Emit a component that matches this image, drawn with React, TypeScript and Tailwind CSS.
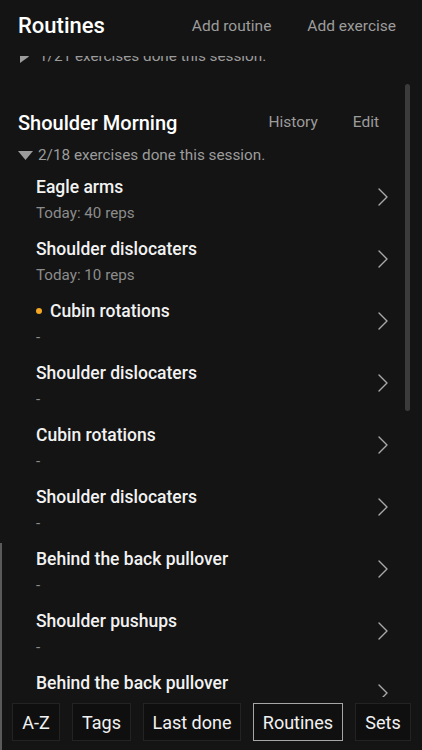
import React from 'react';

type Exercise = { name: string; detail: string; active?: boolean };

const exercises: Exercise[] = [
  { name: 'Eagle arms', detail: 'Today: 40 reps' },
  { name: 'Shoulder dislocaters', detail: 'Today: 10 reps' },
  { name: 'Cubin rotations', detail: '-', active: true },
  { name: 'Shoulder dislocaters', detail: '-' },
  { name: 'Cubin rotations', detail: '-' },
  { name: 'Shoulder dislocaters', detail: '-' },
  { name: 'Behind the back pullover', detail: '-' },
  { name: 'Shoulder pushups', detail: '-' },
  { name: 'Behind the back pullover', detail: '-' },
];

const tabs = [
  { label: 'A-Z', width: 'w-[48px]' },
  { label: 'Tags', width: 'w-[59px]' },
  { label: 'Last done', width: 'w-[98px]' },
  { label: 'Routines', width: 'w-[90px]', active: true },
  { label: 'Sets', width: 'w-[56px]' },
];

const Chevron = () => (
  <svg width="10" height="18" viewBox="0 0 10 18" fill="none" className="shrink-0">
    <path d="M1 1L9 9L1 17" stroke="#a8a8a8" strokeWidth="1.4" strokeLinecap="round" strokeLinejoin="round" />
  </svg>
);

const ExerciseRow = ({ item }: { item: Exercise }) => (
  <div className="flex h-[62px] shrink-0 items-start justify-between pl-[36px] pr-[34px]">
    <div className="flex flex-col">
      <div className="flex h-[22px] items-center gap-[8px] text-[17.5px] font-medium text-[#f2f2f2]">
        {item.active && <span className="h-[6px] w-[6px] rounded-full bg-[#f5a623]" />}
        {item.name}
      </div>
      <div className="mt-[5px] h-[20px] text-[15.2px] leading-[20px] text-[#8c8c8c]">{item.detail}</div>
    </div>
    <div className="mt-[12px]">
      <Chevron />
    </div>
  </div>
);

export default function App() {
  return (
    <div
      className="relative flex h-[750px] w-[422px] flex-col overflow-hidden bg-[#141414]"
      style={{ fontFamily: 'Roboto, "Noto Sans", sans-serif' }}
    >
      {/* header */}
      <div className="z-10 flex h-[56px] shrink-0 items-start justify-between bg-[#141414] pl-[18px] pr-[26px] pt-[11px]">
        <h1 className="text-[22px] font-medium leading-[30px] text-white">Routines</h1>
        <div className="flex gap-[36px] pt-[2px] text-[15.5px] leading-[26px] text-[#9c9c9c]">
          <span>Add routine</span>
          <span>Add exercise</span>
        </div>
      </div>

      {/* list */}
      <div className="relative flex-1 overflow-hidden">
        <div className="-mt-[10px] flex flex-col">
          <div className="flex h-[20px] items-center gap-[10px] pl-[20px] text-[15.3px] text-[#9c9c9c]">
            <svg width="9" height="13" viewBox="0 0 9 13">
              <path d="M0 0L9 6.5L0 13Z" fill="#9c9c9c" />
            </svg>
            <span>1/21 exercises done this session.</span>
          </div>

          <div className="mt-[43px] flex h-[28px] items-center justify-between pl-[18px] pr-[43px]">
            <span className="text-[20px] font-medium text-white">Shoulder Morning</span>
            <div className="flex gap-[35px] text-[15.5px] text-[#9c9c9c]">
              <span>History</span>
              <span>Edit</span>
            </div>
          </div>

          <div className="mt-[8px] flex h-[20px] items-center gap-[5px] pl-[18px] text-[15.3px] text-[#9c9c9c]">
            <svg width="15" height="9" viewBox="0 0 15 9">
              <path d="M0 0H15L7.5 9Z" fill="#9c9c9c" />
            </svg>
            <span>2/18 exercises done this session.</span>
          </div>

          <div className="mt-[11px] flex flex-col">
            {exercises.map((item, i) => (
              <ExerciseRow key={i} item={item} />
            ))}
          </div>
        </div>

        {/* scrollbar */}
        <div className="absolute right-[12px] top-[28px] h-[327px] w-[5px] rounded-full bg-[#3b3b3b]" />
      </div>

      {/* tab bar */}
      <div className="flex h-[53px] shrink-0 items-start gap-[12px] pl-[12px] pt-[6px]">
        {tabs.map((t) => (
          <div
            key={t.label}
            className={`flex h-[38px] shrink-0 items-center justify-center whitespace-nowrap text-[18px] text-[#f2f2f2] ${t.width} ${
              t.active ? 'border-[1.5px] border-[#a6a6a6] bg-[#101010]' : 'border border-[#232323] bg-[#0f0f0f]'
            }`}
          >
            {t.label}
          </div>
        ))}
      </div>

      {/* left edge line */}
      <div className="absolute bottom-0 left-0 top-[543px] w-[1.5px] bg-[#5a5a5a]" />
    </div>
  );
}
